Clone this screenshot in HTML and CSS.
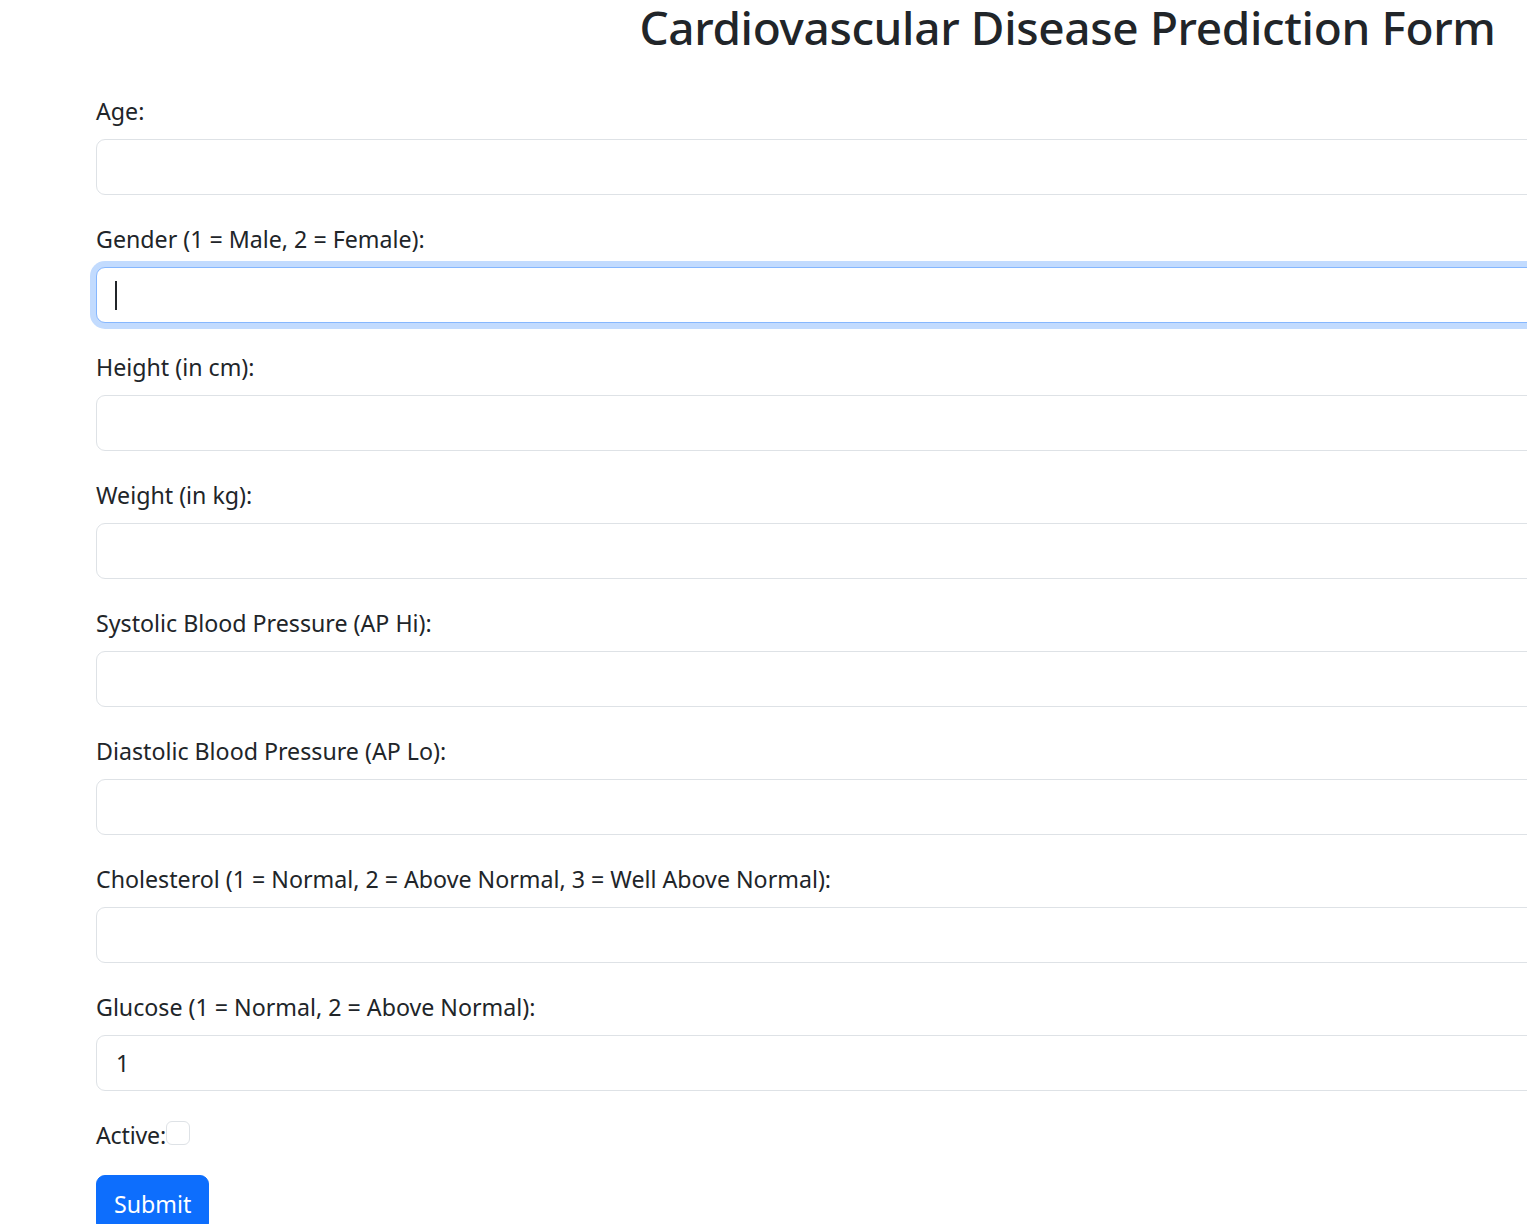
FILE: index.html
```html
<!DOCTYPE html>
<html lang="en">
<head>
<meta charset="utf-8">
<title>Cardiovascular Disease Prediction Form</title>
<link rel="stylesheet" href="styles.css">
</head>
<body>
<div class="container">
  <h1 class="title">Cardiovascular Disease Prediction Form</h1>
  <form class="form">
    <div class="group">
      <label class="label" for="age">Age:</label>
      <input class="control" id="age" type="text">
    </div>
    <div class="group">
      <label class="label" for="gender">Gender (1 = Male, 2 = Female):</label>
      <div class="focus-wrap">
        <input class="control control-focus" id="gender" type="text">
        <span class="caret"></span>
      </div>
    </div>
    <div class="group">
      <label class="label" for="height">Height (in cm):</label>
      <input class="control" id="height" type="text">
    </div>
    <div class="group">
      <label class="label" for="weight">Weight (in kg):</label>
      <input class="control" id="weight" type="text">
    </div>
    <div class="group">
      <label class="label" for="aphi">Systolic Blood Pressure (AP Hi):</label>
      <input class="control" id="aphi" type="text">
    </div>
    <div class="group">
      <label class="label" for="aplo">Diastolic Blood Pressure (AP Lo):</label>
      <input class="control" id="aplo" type="text">
    </div>
    <div class="group">
      <label class="label" for="chol">Cholesterol (1 = Normal, 2 = Above Normal, 3 = Well Above Normal):</label>
      <input class="control" id="chol" type="text">
    </div>
    <div class="group">
      <label class="label" for="gluc">Glucose (1 = Normal, 2 = Above Normal):</label>
      <input class="control" id="gluc" type="text" value="1">
    </div>
    <div class="check-row">
      <label class="check-label" for="active">Active:</label><input class="check" id="active" type="checkbox">
    </div>
    <button class="btn" type="button">Submit</button>
  </form>
</div>
</body>
</html>
```

FILE: styles.css
```css
html, body {
  margin: 0;
  padding: 0;
  background: #fff;
  overflow: hidden;
}
body {
  font-family: "Noto Sans", "Open Sans", sans-serif;
  color: #212529;
  font-size: 23.2px;
  line-height: 36px;
}
.container {
  width: 1943px;
  margin-left: 96px;
}
.title {
  margin: 0;
  text-align: center;
  font-size: 46px;
  font-weight: 500;
  letter-spacing: -0.35px;
  line-height: 55px;
  color: #212529;
}
.form {
  margin-top: 36px;
}
.group {
  margin-bottom: 24px;
}
.label {
  display: block;
  padding-top: 2px;
  margin-bottom: 10px;
  font-size: 23.2px;
  line-height: 36px;
}
.control {
  display: block;
  box-sizing: border-box;
  width: 100%;
  height: 56px;
  padding: 0 19px;
  font-family: inherit;
  font-size: 23.2px;
  color: #212529;
  background: #fff;
  border: 1px solid #dee2e6;
  border-radius: 9px;
  outline: none;
}
.control-focus {
  border: 1.5px solid #86b7fe;
  box-shadow: 0 0 0 6px rgba(13, 110, 253, 0.25);
}
.focus-wrap {
  position: relative;
}
.caret {
  position: absolute;
  left: 19px;
  top: 14px;
  width: 2px;
  height: 29px;
  background: #212529;
}
.check-row {
  display: flex;
  align-items: flex-start;
  height: 36px;
  margin-bottom: 24px;
}
.check-label {
  padding-top: 2px;
  font-size: 23.2px;
  line-height: 36px;
  letter-spacing: -0.2px;
}
.check {
  appearance: none;
  -webkit-appearance: none;
  box-sizing: border-box;
  width: 24px;
  height: 24px;
  margin: 6px 0 0 0;
  border: 1px solid #dee2e6;
  border-radius: 6px;
  background: #fff;
}
.btn {
  display: block;
  box-sizing: border-box;
  height: 57px;
  padding: 0 17px;
  font-family: inherit;
  font-size: 23.2px;
  line-height: 36px;
  color: #fff;
  background: #0d6efd;
  border: 1.5px solid #0d6efd;
  border-radius: 9px;
}
```
